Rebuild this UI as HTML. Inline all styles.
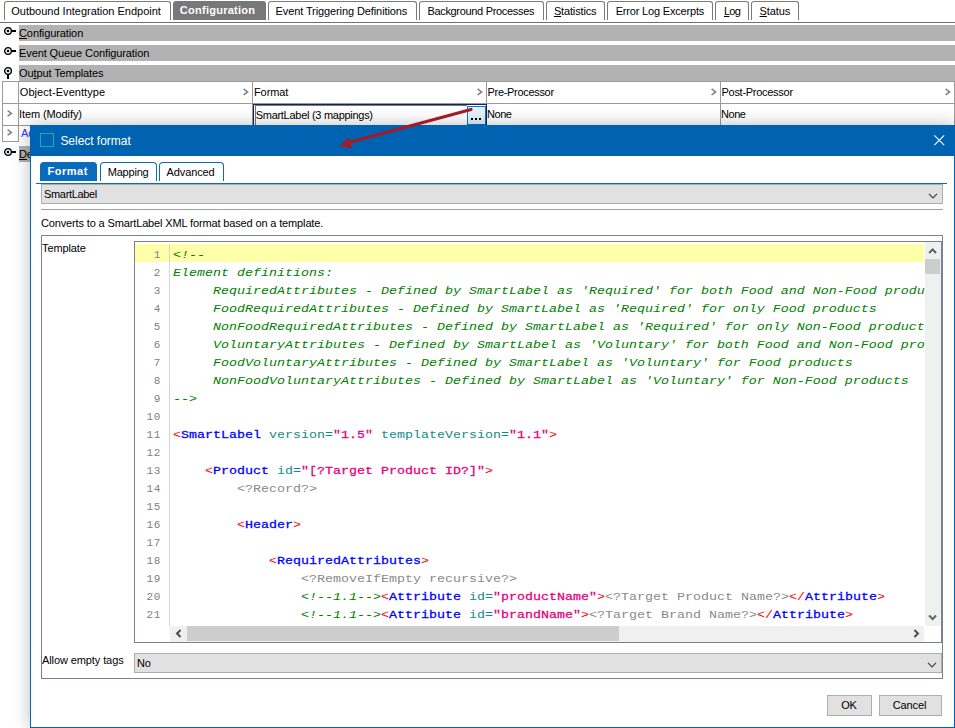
<!DOCTYPE html>
<html>
<head>
<meta charset="utf-8">
<title>Select format</title>
<style>
html,body{margin:0;padding:0;}
body{width:955px;height:728px;position:relative;overflow:hidden;background:#fff;font-family:"Liberation Sans",sans-serif;font-size:11px;color:#000;}
.abs{position:absolute;}
.t{position:absolute;white-space:nowrap;line-height:13px;font-size:11px;letter-spacing:-0.1px;}
u{text-decoration:underline;}
/* top tabs */
.tab{position:absolute;top:1px;height:19px;box-sizing:border-box;border:1px solid #7a7a7a;border-bottom:none;border-radius:3px 3px 0 0;background:#fff;}
.tab span{position:absolute;top:3px;left:0;right:0;text-align:center;white-space:nowrap;line-height:13px;}
.tab.sel span,.dtab.sel span{top:2px;}
.tab.sel{background:#787878;border-color:#787878;color:#fff;font-weight:bold;}
.bar{position:absolute;left:19px;right:0;height:16px;background:#b2b2b2;}
/* table */
.hl{position:absolute;height:1px;background:#9a9a9a;}
.vl{position:absolute;width:1px;background:#9a9a9a;}
/* dialog */
#dlg{position:absolute;left:30px;top:125px;width:925px;height:603px;box-sizing:border-box;border:1px solid #0063b1;border-top:none;background:#fff;box-shadow:0 0 16px rgba(0,0,0,0.27);}
#title{position:absolute;left:30px;top:125px;width:925px;height:31px;background:#0063b1;}
.dtab{position:absolute;top:162px;height:19px;box-sizing:border-box;border:1px solid #0b6cbd;border-bottom:none;border-radius:4px 4px 0 0;background:#fff;}
.dtab span{position:absolute;top:3px;left:0;right:0;text-align:center;white-space:nowrap;line-height:13px;}
.dtab.sel{background:#0a6abb;color:#fff;font-weight:bold;}
.combo{position:absolute;box-sizing:border-box;border:1px solid #adadad;background:#e1e1e1;}
.btn{position:absolute;box-sizing:border-box;border:1px solid #adadad;background:#e1e1e1;text-align:center;}
/* code */
#code{position:absolute;left:134px;top:241px;width:808px;height:402px;box-sizing:border-box;border:1px solid #7b818d;background:#fff;overflow:hidden;}
.ln{position:absolute;left:0;width:26px;text-align:right;font-family:"Liberation Mono",monospace;font-size:11px;letter-spacing:0.6px;color:#808080;line-height:18px;height:18px;padding-top:2px;}
.cl{position:absolute;left:38px;white-space:pre;font-family:"Liberation Mono",monospace;font-size:13.33px;line-height:18px;height:18px;transform:scaleY(0.85);transform-origin:0 13px;margin-top:2px;}
.c{color:#008000;font-style:italic;}
.b{color:#ff0000;}
.tg{color:#0000ff;-webkit-text-stroke:0.3px #0000ff;}
.at{color:#138a8a;}
.s{color:#e4007f;-webkit-text-stroke:0.3px #e4007f;}
.p{color:#8a8a8a;}
</style>
</head>
<body>
<!-- top tabs -->
<div class="abs" style="left:0;top:22px;width:955px;height:1px;background:#707070;"></div>
<div class="tab" style="left:4px;width:167px;"><span style="left:6.3px;right:auto;letter-spacing:-0.01px;">Outbound Integration Endpoint</span></div>
<div class="tab sel" style="left:173px;width:93px;"><span style="left:5.8px;right:auto;letter-spacing:0.26px;">Configuration</span></div>
<div class="tab" style="left:268px;width:149px;"><span style="left:6.5px;right:auto;letter-spacing:-0.10px;">Event Triggering Definitions</span></div>
<div class="tab" style="left:419px;width:125px;"><span style="left:7.4px;right:auto;letter-spacing:-0.32px;">Background Processes</span></div>
<div class="tab" style="left:546px;width:59px;"><span style="left:6.9px;right:auto;letter-spacing:-0.15px;"><u>S</u>tatistics</span></div>
<div class="tab" style="left:607px;width:106px;"><span style="left:7.7px;right:auto;letter-spacing:-0.18px;">Error Log Excerpts</span></div>
<div class="tab" style="left:715px;width:34px;"><span style="left:8.0px;right:auto;letter-spacing:-0.80px;"><u>L</u>og</span></div>
<div class="tab" style="left:751px;width:48px;"><span style="left:7.6px;right:auto;letter-spacing:-0.10px;"><u>S</u>tatus</span></div>

<!-- section bars -->
<div class="bar" style="top:25px;"></div>
<div class="bar" style="top:45px;"></div>
<div class="bar" style="top:65px;"></div>
<div class="bar" style="top:146px;"></div>
<div class="t" style="left:19px;top:27px;"><u>C</u>onfiguration</div>
<div class="t" style="left:19px;top:47px;">Event Queue Configuration</div>
<div class="t" style="left:19px;top:67px;">Ou<u>t</u>put Templates</div>
<div class="t" style="left:19px;top:148px;"><u>D</u>escription</div>


<!-- section icons -->
<svg class="abs" style="left:3px;top:26px;" width="14" height="10" viewBox="0 0 14 10"><circle cx="5" cy="5" r="3.4" fill="#cfe0f0" stroke="#000" stroke-width="1.3"/><rect x="4" y="4" width="2" height="2" fill="#000"/><rect x="8.5" y="4" width="4.5" height="2" fill="#000"/></svg>
<svg class="abs" style="left:3px;top:46px;" width="14" height="10" viewBox="0 0 14 10"><circle cx="5" cy="5" r="3.4" fill="#cfe0f0" stroke="#000" stroke-width="1.3"/><rect x="4" y="4" width="2" height="2" fill="#000"/><rect x="8.5" y="4" width="4.5" height="2" fill="#000"/></svg>
<svg class="abs" style="left:3px;top:66px;" width="10" height="14" viewBox="0 0 10 14"><circle cx="5" cy="5" r="3.4" fill="#cfe0f0" stroke="#000" stroke-width="1.3"/><rect x="4" y="4" width="2" height="2" fill="#000"/><rect x="4" y="8.5" width="2" height="4.5" fill="#000"/></svg>
<svg class="abs" style="left:3px;top:147px;" width="14" height="10" viewBox="0 0 14 10"><circle cx="5" cy="5" r="3.4" fill="#cfe0f0" stroke="#000" stroke-width="1.3"/><rect x="4" y="4" width="2" height="2" fill="#000"/><rect x="8.5" y="4" width="4.5" height="2" fill="#000"/></svg>
<!-- table -->
<div class="hl" style="left:2px;top:81px;width:953px;"></div>
<div class="hl" style="left:2px;top:103px;width:953px;"></div>
<div class="hl" style="left:2px;top:125px;width:953px;"></div>
<div class="hl" style="left:2px;top:141px;width:17px;"></div>
<div class="vl" style="left:2px;top:81px;height:61px;"></div>
<div class="vl" style="left:18px;top:81px;height:61px;"></div>
<div class="vl" style="left:252px;top:81px;height:44px;"></div>
<div class="vl" style="left:486px;top:81px;height:44px;"></div>
<div class="vl" style="left:720px;top:81px;height:44px;"></div>
<div class="vl" style="left:954px;top:81px;height:44px;"></div>

<!-- header sort marks -->
<svg class="abs" style="left:243px;top:88px;" width="7" height="8" viewBox="0 0 7 8"><path d="M0.6 0.9 L4.6 3.9 L0.6 6.9" fill="none" stroke="#808080" stroke-width="1.5"/></svg>
<svg class="abs" style="left:477px;top:88px;" width="7" height="8" viewBox="0 0 7 8"><path d="M0.6 0.9 L4.6 3.9 L0.6 6.9" fill="none" stroke="#808080" stroke-width="1.5"/></svg>
<svg class="abs" style="left:711px;top:88px;" width="7" height="8" viewBox="0 0 7 8"><path d="M0.6 0.9 L4.6 3.9 L0.6 6.9" fill="none" stroke="#808080" stroke-width="1.5"/></svg>
<svg class="abs" style="left:945px;top:88px;" width="7" height="8" viewBox="0 0 7 8"><path d="M0.6 0.9 L4.6 3.9 L0.6 6.9" fill="none" stroke="#808080" stroke-width="1.5"/></svg>
<svg class="abs" style="left:7px;top:110px;" width="7" height="8" viewBox="0 0 7 8"><path d="M0.6 0.7 L4.4 3.4 L0.6 6.1" fill="none" stroke="#808080" stroke-width="1.5"/></svg>
<svg class="abs" style="left:7px;top:129px;" width="7" height="8" viewBox="0 0 7 8"><path d="M0.6 0.7 L4.4 3.4 L0.6 6.1" fill="none" stroke="#808080" stroke-width="1.5"/></svg>
<!-- focused cell -->
<div class="abs" style="left:253px;top:104px;width:234px;height:21px;box-sizing:border-box;border:1px solid #0a246a;border-bottom:none;background:#fff;"></div>
<div class="abs" style="left:255px;top:105px;width:212px;height:20px;box-sizing:border-box;border-top:1px solid #7a7a7a;border-left:1px solid #7a7a7a;background:#fff;"></div>
<div class="abs" style="left:467px;top:106px;width:19px;height:19px;box-sizing:border-box;border:1px solid #0078d7;background:#e5f1fb;"></div>
<div class="abs" style="left:471px;top:118px;width:2px;height:2px;background:#000;"></div>
<div class="abs" style="left:475px;top:118px;width:2px;height:2px;background:#000;"></div>
<div class="abs" style="left:479px;top:118px;width:2px;height:2px;background:#000;"></div>
<div class="t" style="left:19.8px;top:86px;letter-spacing:0.06px;">Object-Eventtype</div>
<div class="t" style="left:254px;top:86px;">Format</div>
<div class="t" style="left:487.5px;top:86px;letter-spacing:-0.31px;">Pre-Processor</div>
<div class="t" style="left:721.5px;top:86px;letter-spacing:-0.28px;">Post-Processor</div>
<div class="t" style="left:19px;top:108px;">Item (Modify)</div>
<div class="t" style="left:255.7px;top:109px;letter-spacing:-0.28px;">SmartLabel (3 mappings)</div>
<div class="t" style="left:487px;top:108px;letter-spacing:-0.45px;">None</div>
<div class="t" style="left:721px;top:108px;letter-spacing:-0.45px;">None</div>
<div class="t" style="left:21px;top:127px;color:#3030ff;">Add</div>

<!-- dialog -->
<div id="dlg"></div>
<div id="title"></div>
<div class="abs" style="left:40px;top:133px;width:14px;height:14px;box-sizing:border-box;border:1px solid #12acbe;"></div>
<div class="t" style="left:60.4px;top:134px;font-size:12px;line-height:15px;color:#fff;letter-spacing:-0.03px;">Select format</div>


<svg class="abs" style="left:0;top:0;pointer-events:none;" width="955" height="728" viewBox="0 0 955 728">
<path d="M471 109.5 L347 143" fill="none" stroke="#a41a25" stroke-width="3.2" stroke-linecap="round"/>
<path d="M339.5 145.5 L349 137.5 L352 148.5 Z" fill="#a41a25"/>
<path d="M934.3 135.3 L944.2 145.2 M944.2 135.3 L934.3 145.2" stroke="#fff" stroke-width="1.1" fill="none"/>
</svg>
<div class="dtab sel" style="left:40px;width:57px;"><span style="left:6.6px;right:auto;letter-spacing:0.5px;">Format</span></div>
<div class="dtab" style="left:100px;width:57px;"><span style="left:6.7px;right:auto;letter-spacing:-0.2px;">Mapping</span></div>
<div class="dtab" style="left:159px;width:65px;"><span style="left:6.5px;right:auto;letter-spacing:-0.1px;">Advanced</span></div>
<div class="abs" style="left:36px;top:183px;width:911px;height:1px;background:#0b6cbd;"></div>

<div class="combo" style="left:41px;top:184px;width:902px;height:20px;"></div>
<div class="t" style="left:44px;top:188px;letter-spacing:-0.33px;">SmartLabel</div>
<div class="abs" style="left:41px;top:209px;width:902px;height:1px;background:#a0a0a0;"></div>
<div class="t" style="left:41px;top:217px;letter-spacing:-0.14px;">Converts to a SmartLabel XML format based on a template.</div>

<div class="abs" style="left:41px;top:235px;width:902px;height:444px;box-sizing:border-box;border:1px solid #7b818d;"></div>
<div class="t" style="left:42px;top:242px;">Template</div>
<div class="t" style="left:42px;top:654px;">Allow empty tags</div>

<div id="code">
<div class="abs" id="codeclip" style="left:0;top:0;width:790px;height:384px;overflow:hidden;">
<div class="abs" style="left:0;top:2px;width:789px;height:18px;background:#ffffaa;"></div>
<div class="abs" style="left:34px;top:2px;width:1px;height:382px;background:#d4d4d4;"></div>
<div class="ln" style="top:2px;">1</div><div class="cl" style="top:2px;"><span class="c">&lt;!--</span></div>
<div class="ln" style="top:20px;">2</div><div class="cl" style="top:20px;"><span class="c">Element definitions:</span></div>
<div class="ln" style="top:38px;">3</div><div class="cl" style="top:38px;"><span class="c">     RequiredAttributes - Defined by SmartLabel as 'Required' for both Food and Non-Food products</span></div>
<div class="ln" style="top:56px;">4</div><div class="cl" style="top:56px;"><span class="c">     FoodRequiredAttributes - Defined by SmartLabel as 'Required' for only Food products</span></div>
<div class="ln" style="top:74px;">5</div><div class="cl" style="top:74px;"><span class="c">     NonFoodRequiredAttributes - Defined by SmartLabel as 'Required' for only Non-Food products</span></div>
<div class="ln" style="top:92px;">6</div><div class="cl" style="top:92px;"><span class="c">     VoluntaryAttributes - Defined by SmartLabel as 'Voluntary' for both Food and Non-Food products</span></div>
<div class="ln" style="top:110px;">7</div><div class="cl" style="top:110px;"><span class="c">     FoodVoluntaryAttributes - Defined by SmartLabel as 'Voluntary' for Food products</span></div>
<div class="ln" style="top:128px;">8</div><div class="cl" style="top:128px;"><span class="c">     NonFoodVoluntaryAttributes - Defined by SmartLabel as 'Voluntary' for Non-Food products</span></div>
<div class="ln" style="top:146px;">9</div><div class="cl" style="top:146px;"><span class="c">--&gt;</span></div>
<div class="ln" style="top:164px;">10</div><div class="cl" style="top:164px;"></div>
<div class="ln" style="top:182px;">11</div><div class="cl" style="top:182px;"><span class="b">&lt;</span><span class="tg">SmartLabel</span> <span class="at">version=</span><span class="s">"1.5"</span> <span class="at">templateVersion=</span><span class="s">"1.1"</span><span class="b">&gt;</span></div>
<div class="ln" style="top:200px;">12</div><div class="cl" style="top:200px;"></div>
<div class="ln" style="top:218px;">13</div><div class="cl" style="top:218px;">    <span class="b">&lt;</span><span class="tg">Product</span> <span class="at">id=</span><span class="s">"[?Target Product ID?]"</span><span class="b">&gt;</span></div>
<div class="ln" style="top:236px;">14</div><div class="cl" style="top:236px;">        <span class="p">&lt;?Record?&gt;</span></div>
<div class="ln" style="top:254px;">15</div><div class="cl" style="top:254px;"></div>
<div class="ln" style="top:272px;">16</div><div class="cl" style="top:272px;">        <span class="b">&lt;</span><span class="tg">Header</span><span class="b">&gt;</span></div>
<div class="ln" style="top:290px;">17</div><div class="cl" style="top:290px;"></div>
<div class="ln" style="top:308px;">18</div><div class="cl" style="top:308px;">            <span class="b">&lt;</span><span class="tg">RequiredAttributes</span><span class="b">&gt;</span></div>
<div class="ln" style="top:326px;">19</div><div class="cl" style="top:326px;">                <span class="p">&lt;?RemoveIfEmpty recursive?&gt;</span></div>
<div class="ln" style="top:344px;">20</div><div class="cl" style="top:344px;">                <span class="c">&lt;!--1.1--&gt;</span><span class="b">&lt;</span><span class="tg">Attribute</span> <span class="at">id=</span><span class="s">"productName"</span><span class="b">&gt;</span><span class="p">&lt;?Target Product Name?&gt;</span><span class="b">&lt;/</span><span class="tg">Attribute</span><span class="b">&gt;</span></div>
<div class="ln" style="top:362px;">21</div><div class="cl" style="top:362px;">                <span class="c">&lt;!--1.1--&gt;</span><span class="b">&lt;</span><span class="tg">Attribute</span> <span class="at">id=</span><span class="s">"brandName"</span><span class="b">&gt;</span><span class="p">&lt;?Target Brand Name?&gt;</span><span class="b">&lt;/</span><span class="tg">Attribute</span><span class="b">&gt;</span></div>
</div>
<!-- scrollbars -->
<div class="abs" style="left:790px;top:0;width:16px;height:384px;background:#f0f0f0;"></div>
<div class="abs" style="left:790px;top:17px;width:15px;height:15px;background:#cdcdcd;"></div>
<div class="abs" style="left:35px;top:384px;width:754px;height:16px;background:#f0f0f0;"></div>
<div class="abs" style="left:52px;top:384px;width:432px;height:15px;background:#cdcdcd;"></div>
<div class="abs" style="left:790px;top:384px;width:16px;height:16px;background:#fff;"></div>
<svg class="abs" style="left:790px;top:0;" width="16" height="17" viewBox="0 0 16 17"><path d="M4.2 11 L7.6 7.4 L11 11" fill="none" stroke="#606060" stroke-width="2"/></svg>
<svg class="abs" style="left:790px;top:367px;" width="16" height="17" viewBox="0 0 16 17"><path d="M4.2 6.5 L7.6 10.1 L11 6.5" fill="none" stroke="#606060" stroke-width="2"/></svg>
<svg class="abs" style="left:35px;top:384px;" width="17" height="16" viewBox="0 0 17 16"><path d="M10.6 4 L7 7.5 L10.6 11" fill="none" stroke="#505050" stroke-width="2"/></svg>
<svg class="abs" style="left:773px;top:384px;" width="17" height="16" viewBox="0 0 17 16"><path d="M6.4 4 L10 7.5 L6.4 11" fill="none" stroke="#505050" stroke-width="2"/></svg>
</div>

<div class="combo" style="left:134px;top:653px;width:808px;height:20px;"></div>
<div class="t" style="left:137px;top:657px;">No</div>


<svg class="abs" style="left:927px;top:191px;" width="12" height="9" viewBox="0 0 12 9"><path d="M2 2.8 L6 6.9 L10 2.8" fill="none" stroke="#404040" stroke-width="1.2"/></svg>
<svg class="abs" style="left:926px;top:660px;" width="12" height="9" viewBox="0 0 12 9"><path d="M2 2.8 L6 6.9 L10 2.8" fill="none" stroke="#404040" stroke-width="1.2"/></svg>
<div class="btn" style="left:827px;top:695px;width:45px;height:21px;"></div>
<div class="btn" style="left:879px;top:695px;width:63px;height:21px;"></div>
<div class="t" style="left:827px;top:699px;width:44px;text-align:center;">OK</div>
<div class="t" style="left:878px;top:699px;width:63px;text-align:center;">Cancel</div>
</body>
</html>
